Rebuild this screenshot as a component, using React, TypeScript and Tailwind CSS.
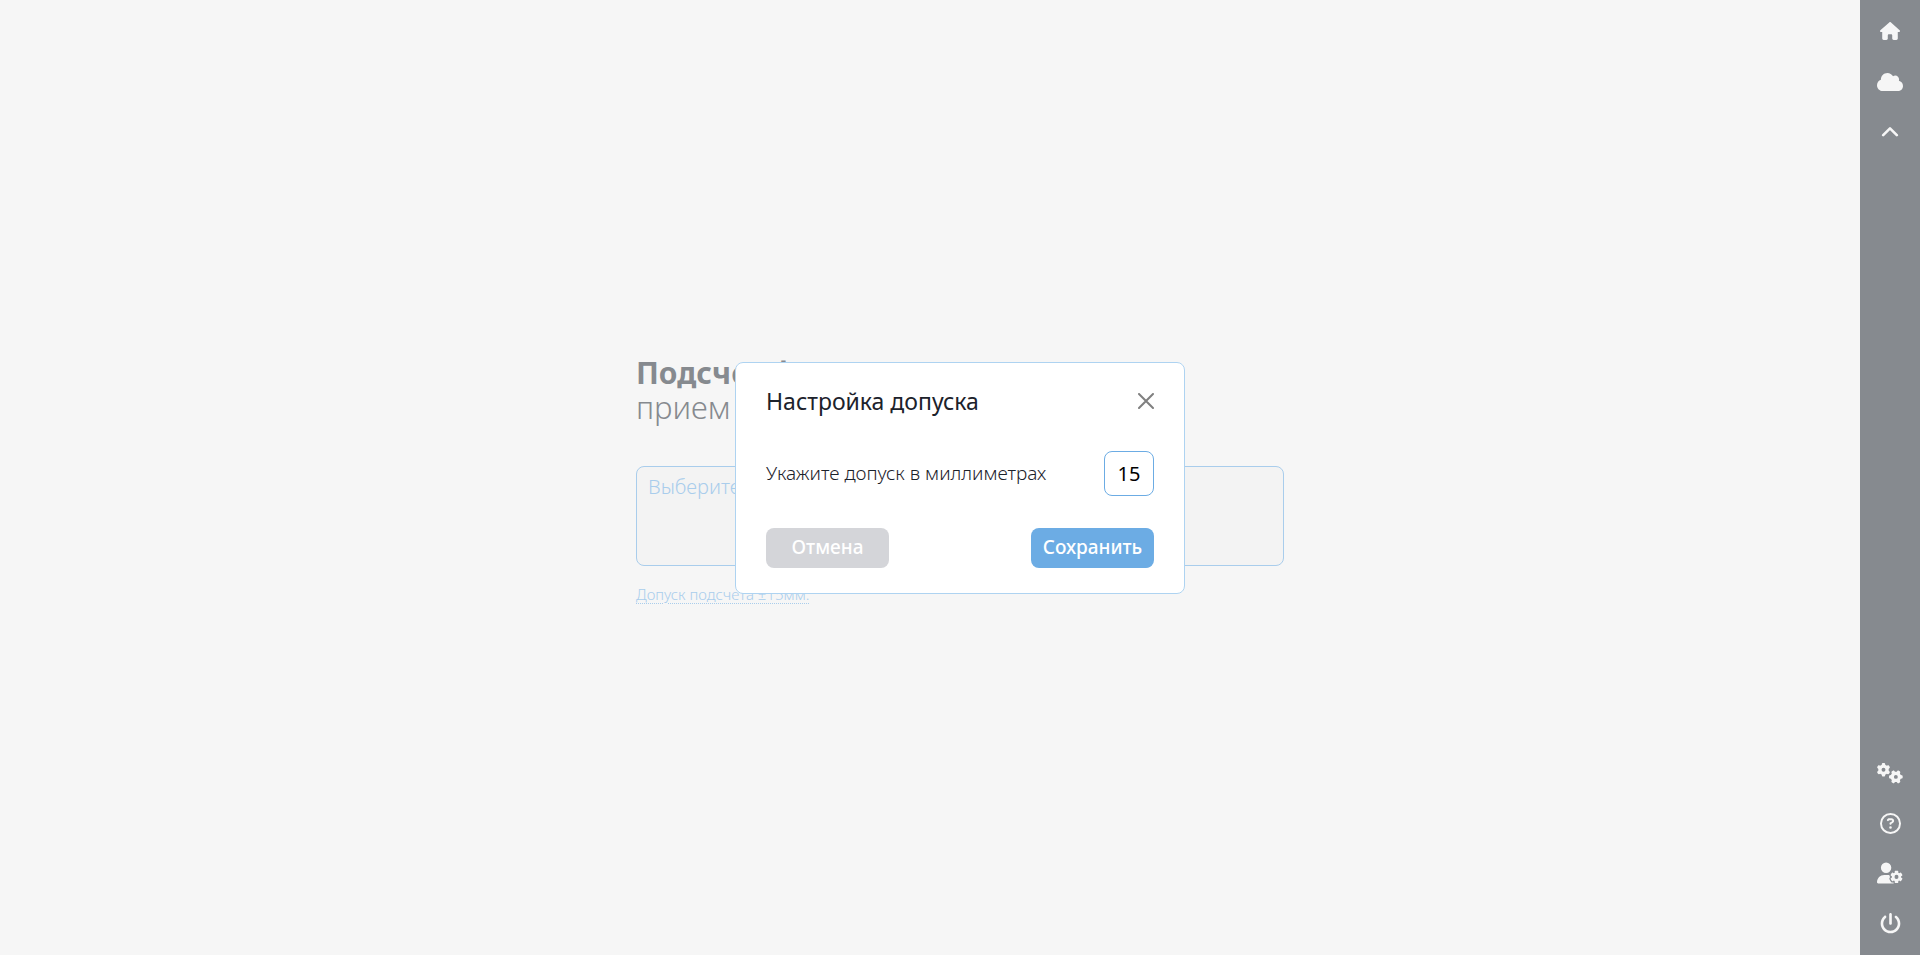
import { useState } from "react";
import type { ReactNode } from "react";
import {
  FaHouse,
  FaCloud,
  FaGears,
  FaRegCircleQuestion,
  FaUserGear,
  FaPowerOff,
} from "react-icons/fa6";

function NavButton({ label, children }: { label: string; children: ReactNode }) {
  return (
    <button type="button" aria-label={label} className="flex h-[50px] w-full items-center justify-center">
      {children}
    </button>
  );
}

function Sidebar() {
  return (
    <nav className="flex w-[60px] shrink-0 flex-col justify-between bg-[#868a8f] pt-1.5 pb-[7px] text-[#f6f6f6]">
      <div className="flex flex-col gap-px">
        <NavButton label="Главная"><FaHouse size={20} /></NavButton>
        <NavButton label="Облако"><FaCloud size={26} /></NavButton>
        <NavButton label="Свернуть">
          <svg width="18" height="12" viewBox="0 0 18 12" fill="none" stroke="currentColor" strokeWidth="2.6" strokeLinecap="round" strokeLinejoin="round">
            <path d="M2.2 8.2L9 1.4L15.8 8.2" />
          </svg>
        </NavButton>
      </div>
      <div>
        <NavButton label="Настройки"><FaGears size={26} /></NavButton>
        <NavButton label="Помощь"><FaRegCircleQuestion size={21} /></NavButton>
        <NavButton label="Профиль"><FaUserGear size={26} /></NavButton>
        <NavButton label="Выход"><FaPowerOff size={21} /></NavButton>
      </div>
    </nav>
  );
}

function ToleranceDialog() {
  const [value, setValue] = useState("15");
  return (
    <div className="fixed inset-0 flex items-center justify-center">
      <div
        role="dialog"
        aria-labelledby="dialog-title"
        className="w-[450px] rounded-lg border border-[#aed3f1] bg-white px-[30px] pt-5 pb-[25px]"
      >
        <div className="flex items-center justify-between">
          <h2 id="dialog-title" className="text-[23px] leading-9 text-[#1c222b]">Настройка допуска</h2>
          <button type="button" aria-label="Закрыть" className="text-[#808080]">
            <svg width="16" height="16" viewBox="0 0 16 16" stroke="currentColor" strokeWidth="2" strokeLinecap="round">
              <path d="M1 1l14 14M15 1L1 15" />
            </svg>
          </button>
        </div>
        <div className="mt-8 flex items-center justify-between">
          <label htmlFor="tolerance" className="text-[19px] font-light text-[#1c222b]">
            Укажите допуск в миллиметрах
          </label>
          <input
            id="tolerance"
            value={value}
            onChange={(e) => setValue(e.target.value)}
            className="h-[45px] w-[50px] rounded-lg border border-[#6cace4] text-center text-xl text-black outline-none"
          />
        </div>
        <div className="mt-8 flex justify-between text-[19px] font-medium text-white">
          <button type="button" className="h-10 w-[123px] rounded-lg bg-[#d4d5d9]">Отмена</button>
          <button type="button" className="h-10 w-[123px] rounded-lg bg-[#6cace4]">Сохранить</button>
        </div>
      </div>
    </div>
  );
}

export default function App() {
  return (
    <div className="flex min-h-screen bg-[#f6f6f6] font-['Noto_Sans',sans-serif]">
      <main className="flex flex-1 items-center justify-center pt-1 pl-[60px]">
        <div className="w-full max-w-[648px]">
          <h1 className="leading-[34px] text-[#868a8f]">
            <span className="block text-[30px] leading-[34px] font-bold">Подсчет форм</span>
            <span className="block text-[31px] leading-[34px] font-light">прием</span>
          </h1>
          <textarea
            aria-label="Выберите"
            placeholder="Выберите"
            className="mt-[42px] block h-[100px] w-full resize-none rounded-lg border border-[#a9cdec] bg-[#f3f3f3] px-[11px] py-1.5 text-xl font-light outline-none placeholder:text-[#a9cdec]"
          />
          <a
            href="#tolerance"
            className="mt-[18px] block w-fit text-[15px] leading-5 font-light text-[#a9cdec] underline decoration-dotted decoration-1 underline-offset-3"
          >
            Допуск подсчета ±15мм.
          </a>
        </div>
      </main>
      <Sidebar />
      <ToleranceDialog />
    </div>
  );
}
